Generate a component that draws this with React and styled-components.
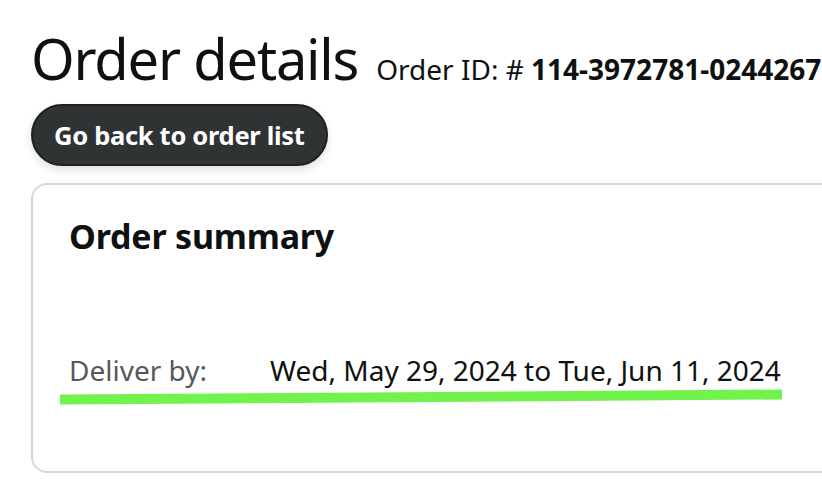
import React from "react";
import styled, { createGlobalStyle } from "styled-components";

const GlobalStyle = createGlobalStyle`
    html, body {
        margin: 0;
        padding: 0;
        background: #ffffff;
        overflow: hidden;
    }
    body {
        font-family: "Noto Sans", "Liberation Sans", sans-serif;
        color: #0f1111;
    }
`;

const Page = styled.div`
    width: 822px;
    height: 479px;
    padding: 22px 0 0 31px;
    box-sizing: border-box;
    overflow: hidden;
`;

const TitleRow = styled.div`
    display: flex;
    align-items: baseline;
    white-space: nowrap;
`;

const Title = styled.h1`
    margin: 0;
    font-size: 56px;
    font-weight: 400;
    line-height: 72px;
    letter-spacing: -1.2px;
`;

const OrderId = styled.span`
    margin-left: 18px;
    font-size: 28px;
    letter-spacing: 0;

    b {
        font-weight: 700;
    }
`;

const BackButton = styled.button`
    display: block;
    margin-top: 10px;
    height: 62px;
    padding: 0 21px;
    border-radius: 31px;
    border: 2px solid #1f2121;
    background: #303333;
    color: #ffffff;
    font-family: inherit;
    font-size: 25.5px;
    font-weight: 700;
    letter-spacing: -0.3px;
    box-shadow: 0 4px 8px rgba(0, 0, 0, 0.12);
    cursor: pointer;
`;

const Card = styled.section`
    position: relative;
    margin-top: 17px;
    width: 860px;
    height: 290px;
    box-sizing: border-box;
    border: 2px solid #d5d9d9;
    border-radius: 16px;
    padding: 28px 36px;
`;

const CardTitle = styled.h2`
    margin: 0;
    font-size: 34px;
    font-weight: 700;
    line-height: 46px;
    letter-spacing: -0.2px;
`;

const DeliveryRow = styled.div`
    display: grid;
    grid-template-columns: 201px auto;
    margin-top: 92px;
    font-size: 28px;
    line-height: 38px;
    white-space: nowrap;
`;

const Label = styled.span`
    color: #565959;
`;

const Value = styled.span`
    color: #0f1111;
`;

const Highlight = styled.svg`
    position: absolute;
    left: 27px;
    top: 204px;
    width: 724px;
    height: 16px;
    overflow: visible;
`;

export default function App() {
    return (
        <>
            <GlobalStyle />
            <Page>
                <TitleRow>
                    <Title>Order details</Title>
                    <OrderId>
                        Order ID: # <b>114-3972781-0244267</b>
                    </OrderId>
                </TitleRow>
                <BackButton>Go back to order list</BackButton>
                <Card>
                    <CardTitle>Order summary</CardTitle>
                    <DeliveryRow>
                        <Label>Deliver by:</Label>
                        <Value>Wed, May 29, 2024 to Tue, Jun 11, 2024</Value>
                    </DeliveryRow>
                    <Highlight viewBox="0 0 724 16">
                        <path d="M0 10.5 L722 5.5" stroke="#72f24c" strokeWidth="10" fill="none" />
                    </Highlight>
                </Card>
            </Page>
        </>
    );
}
